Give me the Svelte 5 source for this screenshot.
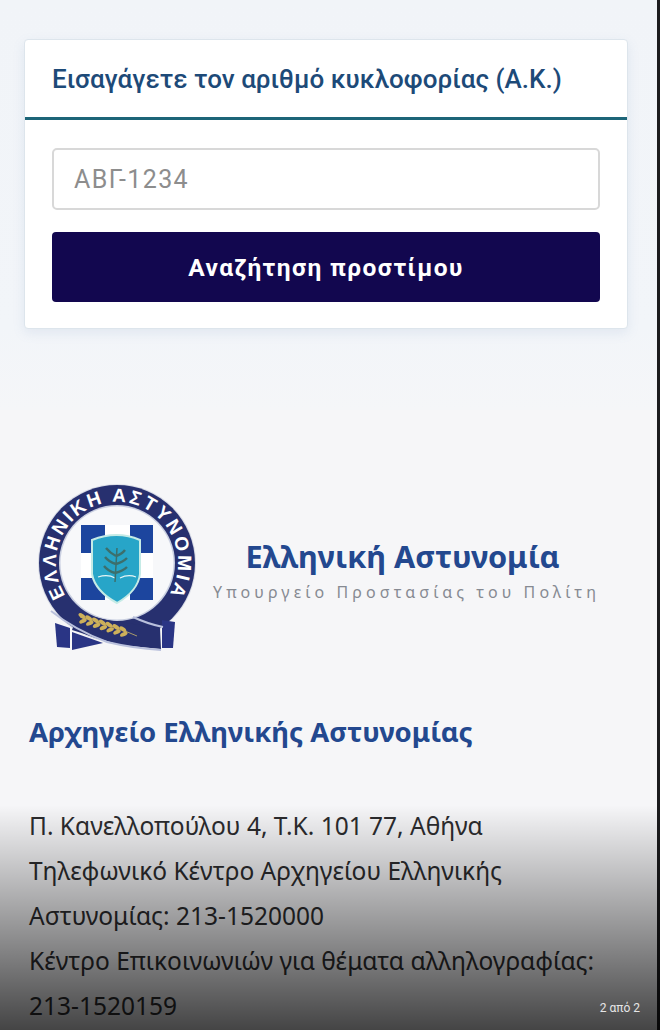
<script lang="ts">
  let plate = $state('')
  const address = [
    'Π. Κανελλοπούλου 4, Τ.Κ. 101 77, Αθήνα',
    'Τηλεφωνικό Κέντρο Αρχηγείου Ελληνικής',
    'Αστυνομίας: 213-1520000',
    'Κέντρο Επικοινωνιών για θέματα αλληλογραφίας:',
    '213-1520159'
  ]
  // grains of the wheat ear on the ribbon
  const grains = [0, 1, 2, 3, 4, 5, 6]
</script>

<div class="root">
  <div class="page">
    <section class="search">
      <div class="card">
        <h2 class="card-title">Εισαγάγετε τον αριθμό κυκλοφορίας (Α.Κ.)</h2>
        <div class="card-body">
          <input class="plate" placeholder="ΑΒΓ-1234" bind:value={plate} />
          <button class="submit">Αναζήτηση προστίμου</button>
        </div>
      </div>
    </section>

    <footer class="footer">
      <div class="brand">
        <svg class="logo" viewBox="0 0 190 190" width="190" height="190" aria-hidden="true">
          <defs>
            <path id="ring-text" d="M 53 135 A 61 61 0 1 1 141 135" />
          </defs>
          <circle cx="97" cy="93" r="79" fill="#d9dce6" />
          <circle cx="97" cy="93" r="78" fill="#27306f" />
          <circle cx="97" cy="93" r="58" fill="#c9cfe0" />
          <circle cx="97" cy="93" r="56.5" fill="#f7f8fa" />
          <text class="ring-label"><textPath href="#ring-text" startOffset="50%" text-anchor="middle">ΕΛΛΗΝΙΚΗ ΑΣΤΥΝΟΜΙΑ</textPath></text>

          <rect x="61" y="55" width="72" height="75" fill="#1c459e" />
          <rect x="85" y="55" width="25" height="75" fill="#fff" />
          <rect x="61" y="83" width="72" height="25" fill="#fff" />
          <path d="M72 70 Q97 60 120 70 L120 104 Q118 121 97 133 Q75 121 72 104 Z" fill="#27a5c8" stroke="#c5ebe6" stroke-width="2" />
          <path d="M78 107 Q88 104 95 108 M100 108 Q108 104 116 107" stroke="#e6f5f5" stroke-width="1.2" fill="none" />
          <path d="M97 78 L95 112" stroke="#3c6f6c" stroke-width="1.5" fill="none" />
          <path d="M96 86 Q90 83 86 78 M96 86 Q102 84 105 80 M96 94 Q89 92 85 87 M96 94 Q103 92 107 88 M95 103 Q88 101 84 96 M95 103 Q103 101 107 97" stroke="#3c6f6c" stroke-width="2.4" fill="none" />

          <path d="M35 153 L50 158 L50 178 L37 177 Z" fill="#2a3585" />
          <path d="M142 150 L155 152 L153 178 L142 178 Z" fill="#2a3585" />
          <path d="M52 162 L83 173 L52 180 Z" fill="#2a3585" />
          <path d="M58 143 L87 150 L140 158 L141 179 L100 175 L52 160 Z" fill="#27306f" />
          <path d="M31 141 Q55 160 87 172 Q112 178 141 180" fill="none" stroke="#b9c0dc" stroke-width="2" />
          <path d="M113 147 Q128 154 143 157" fill="none" stroke="#b9c0dc" stroke-width="2" />
          <path d="M60 147 Q90 154 117 166" fill="none" stroke="#a89a6a" stroke-width="1" />
          <g fill="#cdb05a">
            {#each grains as i}
              <ellipse cx={62 + i * 6.8} cy={146 + i * 2.2} rx="4" ry="2" transform="rotate(35 {62 + i * 6.8} {146 + i * 2.2})" />
              <ellipse cx={63 + i * 6.8} cy={151 + i * 2.2} rx="4" ry="2" transform="rotate(-25 {63 + i * 6.8} {151 + i * 2.2})" />
            {/each}
          </g>
        </svg>
        <div class="brand-text">
          <div class="brand-name">Ελληνική Αστυνομία</div>
          <div class="brand-sub">Υπουργείο Προστασίας του Πολίτη</div>
        </div>
      </div>

      <h3 class="hq">Αρχηγείο Ελληνικής Αστυνομίας</h3>

      <div class="address">
        {#each address as line}
          <p>{line}</p>
        {/each}
      </div>
    </footer>
  </div>

  <div class="edge"></div>
  <div class="shade"></div>
  <div class="counter">2 από 2</div>
</div>

<style>
  :global(body) {
    margin: 0;
    background: #f6f6f8;
  }

  .root {
    position: relative;
    display: flex;
    height: 1030px;
    overflow: hidden;
    font-family: Roboto, sans-serif;
  }

  .page {
    flex: 1;
    min-width: 0;
  }

  .edge {
    width: 3px;
    background: #1c1c1e;
  }

  .search {
    height: 410px;
    box-sizing: border-box;
    padding: 39px 29px 0 24px;
    background: linear-gradient(to bottom, #f1f4f8, #f2f5f9 80%, #f5f6f8);
  }

  .card {
    height: 290px;
    box-sizing: border-box;
    background: #fff;
    border: 1px solid #dde5ec;
    border-radius: 4px;
    box-shadow: 0 4px 12px rgba(120, 150, 190, 0.14);
  }

  .card-title {
    height: 77px;
    margin: 0;
    padding: 0 27px;
    display: flex;
    align-items: center;
    border-bottom: 3px solid #1d6578;
    font-size: 26px;
    font-weight: 500;
    color: #1d4a78;
    white-space: nowrap;
  }

  .card-body {
    display: flex;
    flex-direction: column;
    gap: 22px;
    padding: 28px 27px 0;
  }

  .plate {
    height: 62px;
    box-sizing: border-box;
    padding: 0 20px;
    border: 2px solid #d8d8d8;
    border-radius: 5px;
    background: #fff;
    font-family: inherit;
    font-size: 25px;
    letter-spacing: 1.4px;
    color: #333;
  }

  .plate::placeholder {
    color: #8d8d8d;
    opacity: 1;
  }

  .submit {
    height: 70px;
    border: none;
    border-radius: 4px;
    background: #12074f;
    color: #fff;
    font-family: inherit;
    font-size: 24.5px;
    font-weight: 700;
    letter-spacing: 1.4px;
  }

  .footer {
    padding: 60px 0 0 29px;
  }

  .brand {
    display: flex;
    align-items: center;
    margin-left: -9px;
  }

  .logo {
    flex: none;
  }

  .brand-text {
    display: flex;
    flex-direction: column;
    align-items: center;
    gap: 4px;
    margin: 8px 0 0 3px;
  }

  .brand-name {
    margin-right: 8px;
    font-family: "Noto Sans", sans-serif;
    font-size: 30.7px;
    font-weight: 700;
    color: #23488f;
    white-space: nowrap;
  }

  .brand-sub {
    font-family: "Noto Sans", sans-serif;
    font-size: 16px;
    letter-spacing: 4.1px;
    color: #868a92;
    white-space: nowrap;
  }

  .hq {
    margin: 53px 0 0;
    font-family: "Noto Sans", sans-serif;
    font-size: 27.5px;
    font-weight: 700;
    color: #23488f;
    white-space: nowrap;
  }

  .address {
    margin-top: 53px;
    font-family: "Noto Sans", sans-serif;
    font-size: 24.5px;
    line-height: 45px;
    color: #2c2c2e;
  }

  .address p {
    margin: 0;
    white-space: nowrap;
  }

  .shade {
    position: absolute;
    left: 0;
    right: 0;
    top: 805px;
    bottom: 0;
    background: linear-gradient(to bottom, rgba(0, 0, 0, 0), rgba(0, 0, 0, 0.72));
    pointer-events: none;
  }

  .counter {
    position: absolute;
    right: 20px;
    bottom: 15px;
    font-size: 12px;
    color: #e6e6e6;
  }

  .ring-label {
    font-family: "Liberation Sans", sans-serif;
    font-size: 19px;
    font-weight: 700;
    fill: #fff;
    letter-spacing: 2.5px;
  }
</style>
